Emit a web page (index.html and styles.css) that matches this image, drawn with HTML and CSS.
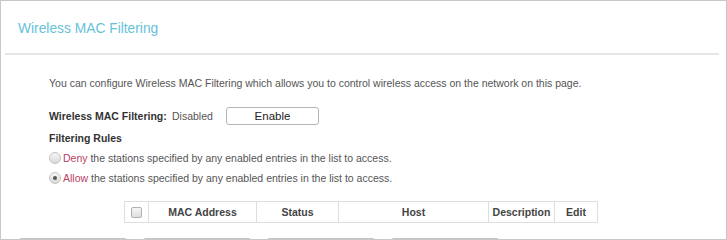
FILE: index.html
```html
<!DOCTYPE html>
<html lang="en">
<head>
  <meta charset="UTF-8">
  <title>Wireless MAC Filtering</title>
  <link rel="stylesheet" href="styles.css">
</head>
<body>
  <div class="panel">
    <h2 class="panel-title">Wireless MAC Filtering</h2>
    <hr class="divider">

    <div class="content">
      <p class="intro">You can configure Wireless MAC Filtering which allows you to control wireless access on the network on this page.</p>

      <div class="status-row">
        <span class="label">Wireless MAC Filtering:</span>
        <span class="state">Disabled</span>
        <button class="btn-enable">Enable</button>
      </div>

      <div class="rules-title">Filtering Rules</div>
      <div class="rule"><span class="radio"></span><span class="keyword">Deny</span> the stations specified by any enabled entries in the list to access.</div>
      <div class="rule"><span class="radio checked"></span><span class="keyword">Allow</span> the stations specified by any enabled entries in the list to access.</div>

      <table class="mac-table">
        <colgroup>
          <col class="c-check">
          <col class="c-mac">
          <col class="c-status">
          <col class="c-host">
          <col class="c-desc">
          <col class="c-edit">
        </colgroup>
        <thead>
          <tr>
            <th><span class="checkbox"></span></th>
            <th>MAC Address</th>
            <th>Status</th>
            <th>Host</th>
            <th>Description</th>
            <th>Edit</th>
          </tr>
        </thead>
      </table>
    </div>

    <!-- only the top edges of these show above the fold -->
    <div class="actions">
      <button class="btn-action" aria-label="Add"></button>
      <button class="btn-action" aria-label="Delete"></button>
      <button class="btn-action" aria-label="Enable All"></button>
      <button class="btn-action" aria-label="Disable All"></button>
    </div>
  </div>
</body>
</html>
```

FILE: styles.css
```css
html, body {
  margin: 0;
  padding: 0;
  background: #fff;
  overflow: hidden;
}
body {
  font-family: 'Liberation Sans', Arial, sans-serif;
  font-size: 10.5px;
  color: #555;
}
.panel {
  height: 240px;
  box-sizing: border-box;
  border: 1px solid #c8c8c8;
  overflow: hidden;
  background: #fff;
}
.panel-title {
  margin: 0;
  padding: 19px 0 0 17px;
  font-size: 13.8px;
  line-height: 18px;
  font-weight: normal;
  color: #66c2d8;
}
.divider {
  margin: 15px 7px 0 4px;
  height: 2px;
  border: none;
  background: #e6e6e6;
}
.content {
  padding-left: 48px;
}
.intro {
  margin: 20px 0 0;
  line-height: 16px;
}
.status-row {
  display: flex;
  align-items: center;
  height: 18px;
  margin-top: 16px;
  white-space: nowrap;
}
.label {
  width: 123px;
  font-weight: bold;
  color: #333;
}
.state {
  width: 54px;
}
.btn-enable {
  width: 93px;
  height: 18px;
  padding: 0;
  border: 1px solid #b4b4b4;
  border-radius: 3px;
  background: #fff;
  font-family: inherit;
  font-size: 11.5px;
  color: #222;
}
.rules-title {
  margin-top: 3px;
  line-height: 20px;
  font-weight: bold;
  color: #333;
}
.rule {
  line-height: 20px;
  white-space: nowrap;
}
.radio {
  display: inline-block;
  box-sizing: border-box;
  width: 12px;
  height: 12px;
  margin-right: 2px;
  border: 1px solid #c2c2c2;
  border-radius: 50%;
  background: linear-gradient(#f6f6f6, #dadada);
  vertical-align: -2px;
  position: relative;
}
.radio.checked::after {
  content: "";
  position: absolute;
  left: 3px;
  top: 3px;
  width: 4px;
  height: 4px;
  border-radius: 50%;
  background: #555;
}
.keyword {
  color: #b93d63;
}
.mac-table {
  margin: 13px 0 0 75px;
  width: 473px;
  border-collapse: collapse;
  table-layout: fixed;
}
.c-check { width: 24px; }
.c-mac { width: 108px; }
.c-status { width: 82px; }
.c-host { width: 150px; }
.c-desc { width: 66px; }
.c-edit { width: 43px; }
.mac-table th {
  height: 20px;
  padding: 0;
  border: 1px solid #dedede;
  font-weight: bold;
  color: #444;
  text-align: center;
  white-space: nowrap;
}
.checkbox {
  display: inline-block;
  width: 9px;
  height: 9px;
  border: 1px solid #b0b0b0;
  border-radius: 2px;
  background: linear-gradient(#f6f6f6, #dedede);
  vertical-align: middle;
}
.actions {
  display: flex;
  gap: 12px;
  margin: 15px 0 0 16px;
}
.btn-action {
  width: 112px;
  height: 24px;
  border: 1px solid #c4c4c4;
  border-radius: 5px;
  background: #ececec;
}
```
